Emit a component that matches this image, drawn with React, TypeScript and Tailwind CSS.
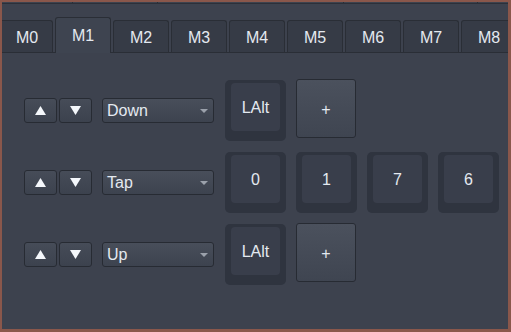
import React from 'react';

const tabs = ['M0', 'M1', 'M2', 'M3', 'M4', 'M5', 'M6', 'M7', 'M8'];

function ArrowButton({ dir }: { dir: 'up' | 'down' }) {
  return (
    <button className="shrink-0 w-[33px] h-[25px] rounded-[3px] border border-[#272b33] bg-gradient-to-b from-[#464c58] to-[#3c424e] flex items-center justify-center">
      <svg width="11" height="9" viewBox="0 0 11 9">
        {dir === 'up' ? (
          <polygon points="5.5,0 11,9 0,9" fill="#f4f7fb" />
        ) : (
          <polygon points="0,0 11,0 5.5,9" fill="#f4f7fb" />
        )}
      </svg>
    </button>
  );
}

function Dropdown({ value }: { value: string }) {
  return (
    <div className="shrink-0 ml-[10px] w-[112px] h-[25px] rounded-[3px] border border-[#272b33] bg-gradient-to-b from-[#484e5a] to-[#3d434f] flex items-center justify-between pl-[4px] pr-[5px]">
      <span>{value}</span>
      <svg width="8" height="4" viewBox="0 0 8 4">
        <polygon points="0,0 8,0 4,4" fill="#9ba1ab" />
      </svg>
    </div>
  );
}

function Key({ label }: { label: string }) {
  return (
    <div className="shrink-0 w-[61px] h-[61px] rounded-[5px] bg-[#2f343f] pt-[3px] px-[6px] pb-[10px]">
      <div className="w-full h-full rounded-[4px] bg-[#393e4b] flex items-center justify-center pt-[2px]">
        {label}
      </div>
    </div>
  );
}

function PlusButton() {
  return (
    <button className="shrink-0 -mt-px w-[60px] h-[59px] rounded-[3px] border border-[#272b33] bg-gradient-to-b from-[#4b515d] to-[#3f4551] flex items-center justify-center pt-[3px]">
      +
    </button>
  );
}

function Row({ action, keys, plus }: { action: string; keys: string[]; plus?: boolean }) {
  return (
    <div className="flex items-center h-[61px]">
      <div className="shrink-0 ml-[22px] flex gap-[2px] -mt-[1px]">
        <ArrowButton dir="up" />
        <ArrowButton dir="down" />
      </div>
      <Dropdown value={action} />
      <div className="shrink-0 ml-[11px] flex items-start gap-[10px]">
        {keys.map((k, i) => (
          <Key key={i} label={k} />
        ))}
        {plus && <PlusButton />}
      </div>
    </div>
  );
}

export default function App() {
  return (
    <div className="w-[511px] h-[332px] overflow-hidden bg-[#3d424e] border-[#8a574b] border-l-2 border-t-2 border-r-[3px] border-b-[3px] flex flex-col text-[16px] text-[#e4e9f0] font-['Liberation_Sans',sans-serif]">
      {/* remnants of the panel above */}
      <div className="h-px flex shrink-0">
        <div className="w-[71px] border-r border-[#2a2e36]" />
        <div className="w-[85px] border-r border-[#2a2e36]" />
        <div className="w-[186px] border-r border-[#2a2e36]" />
        <div className="w-[134px] border-r border-[#2a2e36]" />
      </div>
      <div className="h-px bg-[#2c3039] shrink-0" />

      {/* tab bar */}
      <div className="mt-[13px] h-[36px] flex items-end gap-[2px] border-b border-[#2a2e36] shrink-0">
        {tabs.map((t, i) =>
          t === 'M1' ? (
            <div
              key={t}
              className="relative -mb-px w-[56px] h-[36px] shrink-0 rounded-t-[3px] border border-b-0 border-[#2a2e36] bg-[#3e4450] flex justify-center pt-[6px]"
            >
              {t}
            </div>
          ) : (
            <div
              key={t}
              className={
                'h-[32px] shrink-0 rounded-t-[3px] border border-b-0 border-[#2a2e36] bg-[#363b46] flex justify-center pt-[5px] ' +
                (i === 0 ? 'w-[51px] border-l-0 rounded-tl-none' : 'w-[56px]')
              }
            >
              {t}
            </div>
          )
        )}
      </div>

      {/* macro rows */}
      <div className="pt-[27px] flex flex-col gap-[11px]">
        <Row action="Down" keys={['LAlt']} plus />
        <Row action="Tap" keys={['0', '1', '7', '6', '']} />
        <Row action="Up" keys={['LAlt']} plus />
      </div>
    </div>
  );
}
